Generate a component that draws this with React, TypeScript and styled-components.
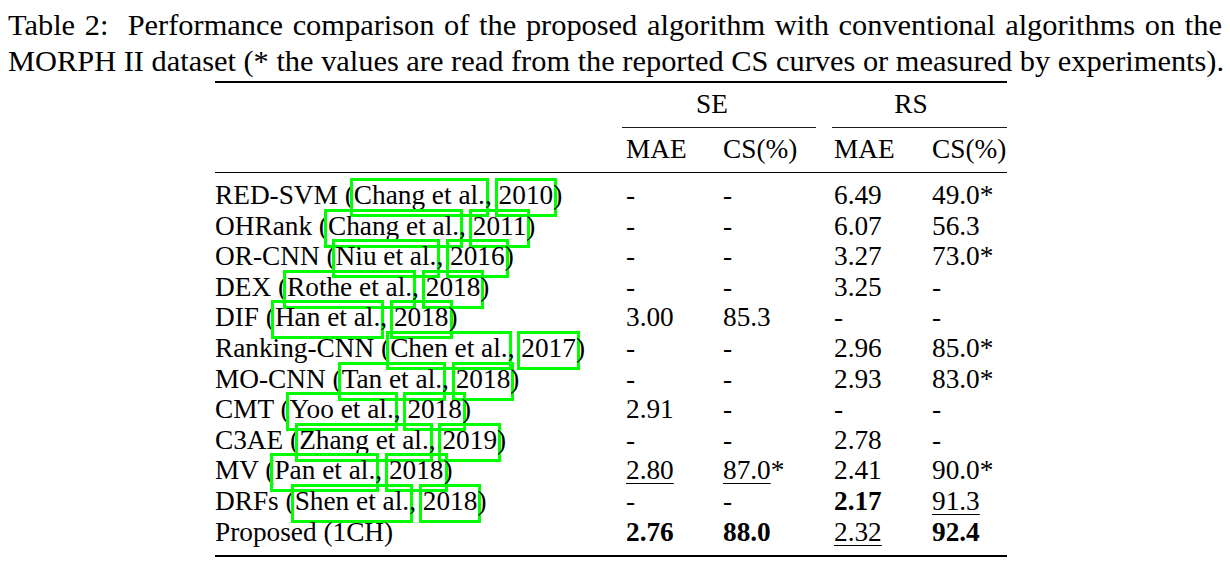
import styled, { createGlobalStyle } from "styled-components";

type Value = { text: string; bold?: boolean; under?: boolean; star?: boolean };

type Row = {
  name: string;
  author?: string;
  year?: string;
  values: Value[];
};

const v = (text: string, opts: Omit<Value, "text"> = {}): Value => ({ text, ...opts });

const rows: Row[] = [
  { name: "RED-SVM", author: "Chang et al.", year: "2010", values: [v("-"), v("-"), v("6.49"), v("49.0", { star: true })] },
  { name: "OHRank", author: "Chang et al.", year: "2011", values: [v("-"), v("-"), v("6.07"), v("56.3")] },
  { name: "OR-CNN", author: "Niu et al.", year: "2016", values: [v("-"), v("-"), v("3.27"), v("73.0", { star: true })] },
  { name: "DEX", author: "Rothe et al.", year: "2018", values: [v("-"), v("-"), v("3.25"), v("-")] },
  { name: "DIF", author: "Han et al.", year: "2018", values: [v("3.00"), v("85.3"), v("-"), v("-")] },
  { name: "Ranking-CNN", author: "Chen et al.", year: "2017", values: [v("-"), v("-"), v("2.96"), v("85.0", { star: true })] },
  { name: "MO-CNN", author: "Tan et al.", year: "2018", values: [v("-"), v("-"), v("2.93"), v("83.0", { star: true })] },
  { name: "CMT", author: "Yoo et al.", year: "2018", values: [v("2.91"), v("-"), v("-"), v("-")] },
  { name: "C3AE", author: "Zhang et al.", year: "2019", values: [v("-"), v("-"), v("2.78"), v("-")] },
  {
    name: "MV",
    author: "Pan et al.",
    year: "2018",
    values: [v("2.80", { under: true }), v("87.0", { under: true, star: true }), v("2.41"), v("90.0", { star: true })],
  },
  { name: "DRFs", author: "Shen et al.", year: "2018", values: [v("-"), v("-"), v("2.17", { bold: true }), v("91.3", { under: true })] },
  {
    name: "Proposed (1CH)",
    values: [v("2.76", { bold: true }), v("88.0", { bold: true }), v("2.32", { under: true }), v("92.4", { bold: true })],
  },
];

export default function App() {
  return (
    <>
      <GlobalStyle />
      <Page>
        <Caption>
          <CaptionLine $justify>
            Table 2:&nbsp; Performance comparison of the proposed algorithm with conventional algorithms on the
          </CaptionLine>
          <CaptionLine>
            MORPH II dataset (* the values are read from the reported CS curves or measured by experiments).
          </CaptionLine>
        </Caption>

        <Table>
          <Rule $weight={2} $top={2} />
          <TableRow $top={6.3}>
            <Cell />
            <GroupCell $col={2} $shift={36}>SE</GroupCell>
            <GroupCell $col={4} $shift={19}>RS</GroupCell>
          </TableRow>
          <CmidRow>
            <CmidRule $width={194} />
            <CmidRule $width={175} />
          </CmidRow>
          <TableRow $top={5.9}>
            <Cell />
            <Cell>MAE</Cell>
            <Cell>CS(%)</Cell>
            <Cell>MAE</Cell>
            <Cell>CS(%)</Cell>
          </TableRow>
          <Rule $weight={1} $top={7.5} />
          <Body>
            {rows.map((row) => (
              <TableRow key={row.name}>
                <Cell>
                  {row.name}
                  {row.author && (
                    <>
                      {" ("}
                      <Cite>{row.author}</Cite>, <Cite>{row.year}</Cite>)
                    </>
                  )}
                </Cell>
                {row.values.map((val, i) => (
                  <Cell key={i} $bold={val.bold}>
                    {val.under ? <Under>{val.text}</Under> : val.text}
                    {val.star && "*"}
                  </Cell>
                ))}
              </TableRow>
            ))}
          </Body>
          <Rule $weight={2} $top={7.9} />
        </Table>
      </Page>
    </>
  );
}

const GlobalStyle = createGlobalStyle`
  html, body {
    margin: 0;
    padding: 0;
    background: #ffffff;
  }
  body {
    font-family: "Liberation Serif", "Times New Roman", serif;
    color: #000000;
  }
`;

const Page = styled.div`
  width: 1214px;
  padding: 8px 8px 0;
`;

const Caption = styled.div`
  font-size: 30.4px;
  line-height: 35.5px;
`;

const CaptionLine = styled.div<{ $justify?: boolean }>`
  white-space: nowrap;
  text-align: ${(p) => (p.$justify ? "justify" : "left")};
  text-align-last: ${(p) => (p.$justify ? "justify" : "auto")};
`;

const Table = styled.div`
  width: 792px;
  margin-left: 207px;
  font-size: 27.3px;
  line-height: 30.6px;
`;

const Rule = styled.div<{ $weight: number; $top: number }>`
  height: ${(p) => p.$weight}px;
  margin-top: ${(p) => p.$top}px;
  background: #000000;
`;

const TableRow = styled.div<{ $top?: number }>`
  display: grid;
  grid-template-columns: 411px 97px 111px 98px 75px;
  margin-top: ${(p) => p.$top ?? 0}px;
`;

const Body = styled.div`
  margin-top: 6.9px;
`;

const Cell = styled.div<{ $bold?: boolean }>`
  white-space: nowrap;
  font-weight: ${(p) => (p.$bold ? 700 : 400)};
`;

const GroupCell = styled.div<{ $col: number; $shift: number }>`
  grid-column: ${(p) => p.$col} / span 2;
  text-align: center;
  padding-right: ${(p) => p.$shift}px;
`;

const CmidRow = styled.div`
  display: flex;
  gap: 16px;
  margin: 7.3px 0 0 407px;
`;

const CmidRule = styled.div<{ $width: number }>`
  width: ${(p) => p.$width}px;
  height: 1px;
  background: #1a1a1a;
`;

const Cite = styled.span`
  padding: 2px 4px 7px;
  margin: 0 -4px;
  box-shadow: inset 0 0 0 3px #00ff00;
`;

const Under = styled.span`
  text-decoration: underline;
  text-decoration-thickness: 1px;
  text-underline-offset: 4px;
`;
